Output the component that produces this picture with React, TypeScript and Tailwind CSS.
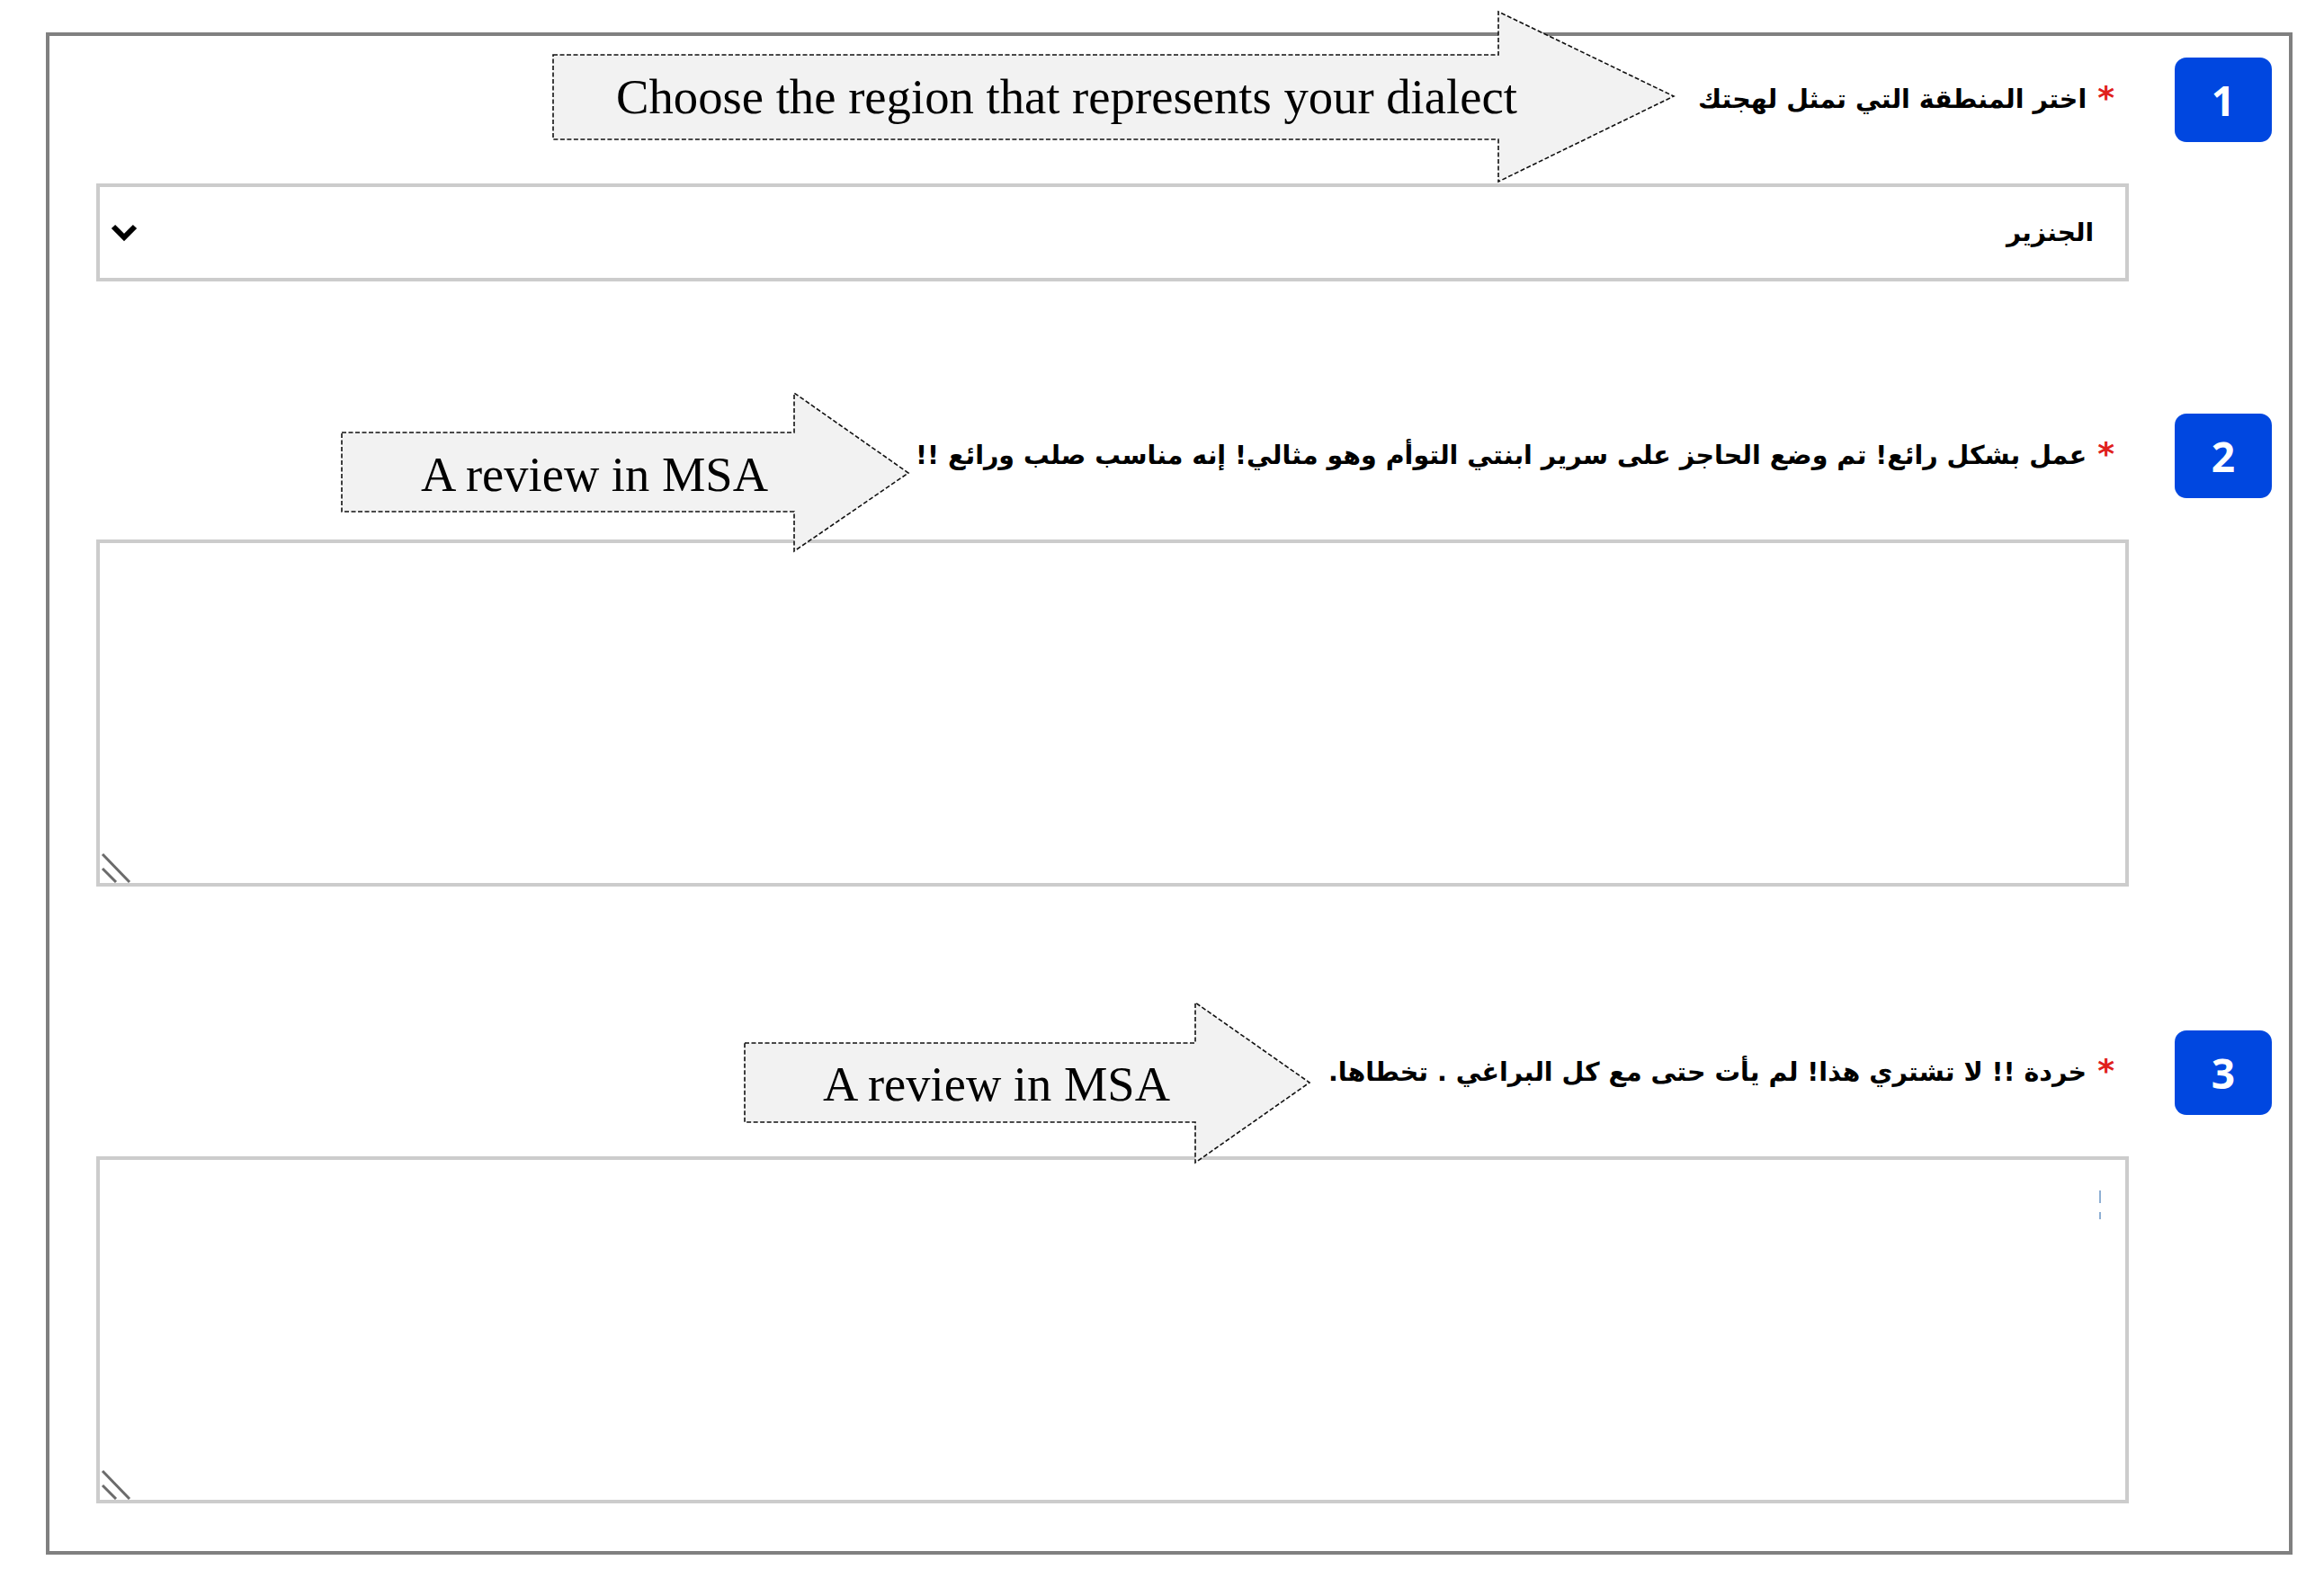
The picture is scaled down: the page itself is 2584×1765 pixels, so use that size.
import React from 'react';

const arabic = { fontFamily: '"DejaVu Sans", "Noto Sans", sans-serif' };

const questions = [
  {
    num: '1',
    label: 'اختر المنطقة التي تمثل لهجتك',
    kind: 'select' as const,
    gap: 'mt-0',
  },
  {
    num: '2',
    label: 'عمل بشكل رائع! تم وضع الحاجز على سرير ابنتي التوأم وهو مثالي! إنه مناسب صلب ورائع !!',
    kind: 'textarea' as const,
    gap: 'mt-[147px]',
  },
  {
    num: '3',
    label: 'خردة !! لا تشتري هذا! لم يأت حتى مع كل البراغي . تخطاها.',
    kind: 'textarea' as const,
    gap: 'mt-[160px]',
    caret: true,
  },
];

const ResizeGrip = () => (
  <svg width="34" height="34" viewBox="0 0 34 34" className="block">
    <line x1="2" y1="2" x2="32" y2="33" stroke="#6b6b6b" strokeWidth="3" />
    <line x1="2" y1="18" x2="17" y2="33" stroke="#6b6b6b" strokeWidth="3" />
  </svg>
);

const Callouts = () => (
  <svg
    width="2584"
    height="1765"
    viewBox="0 0 2584 1765"
    className="absolute left-0 top-0 pointer-events-none"
  >
    <g fill="#f2f2f2" stroke="#111" strokeWidth="1.6" strokeDasharray="5 2.5">
      <polygon points="615,61 1666,61 1666,13 1861,107 1666,202 1666,155 615,155" />
      <polygon points="380,481 883,481 883,437 1010,526 883,613 883,569 380,569" />
      <polygon points="828,1160 1329,1160 1329,1115 1456,1204 1329,1293 1329,1248 828,1248" />
    </g>
    <g fill="#000" fontFamily='"Liberation Serif", "Times New Roman", serif' fontSize="54">
      <text x="685" y="126" textLength="1002" lengthAdjust="spacingAndGlyphs">
        Choose the region that represents your dialect
      </text>
      <text x="468" y="546" textLength="386" lengthAdjust="spacingAndGlyphs">
        A review in MSA
      </text>
      <text x="915" y="1224" textLength="386" lengthAdjust="spacingAndGlyphs">
        A review in MSA
      </text>
    </g>
  </svg>
);

export default function App() {
  return (
    <div className="relative w-[2584px] h-[1765px] bg-white overflow-hidden">
      <div className="pl-[51px] pt-[36px]">
        <div className="w-[2498px] h-[1693px] border-4 border-[#808080] pt-[24px] pl-[52px] pr-[19px]">
          {questions.map((q) => (
            <div key={q.num} className={`flex gap-[51px] ${q.gap}`}>
              {/* field column */}
              <div className="flex-1 flex flex-col">
                <div className="h-[94px] flex items-center justify-end pr-[16px]">
                  <div dir="rtl" className="flex items-center gap-[12px]" style={arabic}>
                    <span className="text-[#e0201c] text-[36px] font-bold leading-none -mt-[4px]">*</span>
                    <span className="text-[28.5px] font-bold text-black tracking-[-0.5px] whitespace-nowrap">
                      {q.label}
                    </span>
                  </div>
                </div>

                {q.kind === 'select' ? (
                  <div
                    dir="rtl"
                    className="mt-[46px] h-[109px] border-4 border-[#cccccc] bg-white flex items-center justify-between pr-[35px] pl-[12px]"
                  >
                    <span className="text-[28px] font-bold text-black" style={arabic}>
                      الجنزير
                    </span>
                    <svg width="30" height="22" viewBox="0 0 30 22">
                      <path d="M3 4 L15 16 L27 4" fill="none" stroke="#000" strokeWidth="6" strokeLinejoin="miter" />
                    </svg>
                  </div>
                ) : (
                  <div className="mt-[46px] h-[386px] border-4 border-[#cccccc] bg-white flex flex-col justify-between">
                    <div className="flex justify-end pr-[27px] pt-[34px]">
                      {q.caret && (
                        <div className="flex flex-col gap-[10px]">
                          <div className="w-[2px] h-[14px] bg-[#8fb0d4]" />
                          <div className="w-[2px] h-[8px] bg-[#8fb0d4]" />
                        </div>
                      )}
                    </div>
                    <div className="flex justify-start pl-[1px]">
                      <ResizeGrip />
                    </div>
                  </div>
                )}
              </div>

              {/* number badge */}
              <div className="w-[108px] shrink-0">
                <div
                  className="h-[94px] rounded-[13px] bg-[#0047e0] flex items-center justify-center text-white text-[46px] font-bold"
                  style={{ fontFamily: '"Open Sans", Inter, sans-serif' }}
                >
                  {q.num}
                </div>
              </div>
            </div>
          ))}
        </div>
      </div>
      <Callouts />
    </div>
  );
}
